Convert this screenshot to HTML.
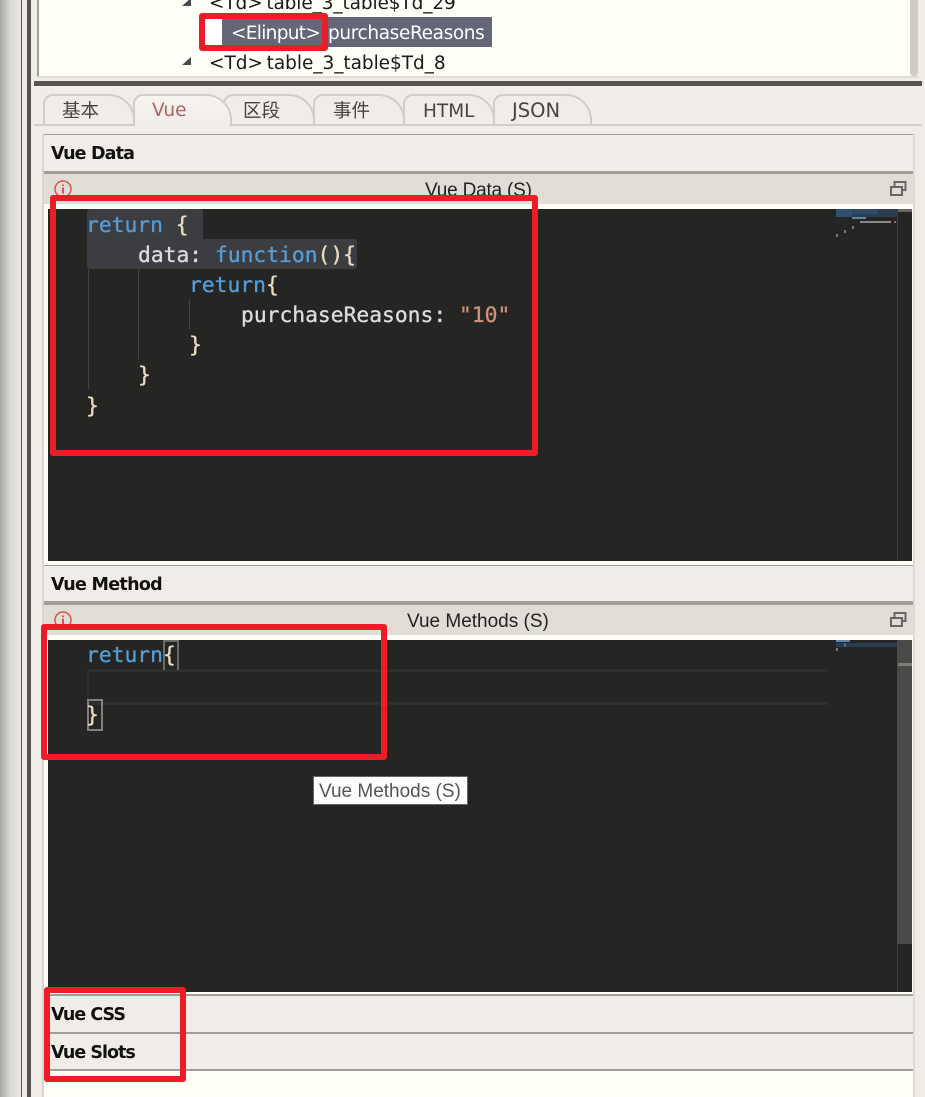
<!DOCTYPE html>
<html><head><meta charset="utf-8"><style>
html,body{margin:0;padding:0}
body{width:925px;height:1097px;position:relative;overflow:hidden;background:#f0ede8;font-family:"Liberation Sans","Noto Sans CJK SC",sans-serif}
.a{position:absolute}
.t{position:absolute;white-space:pre;color:#1a1a1a}
.h{position:absolute;left:51px;font:bold 17.5px/24px "DejaVu Sans",sans-serif;letter-spacing:-.85px;color:#111;white-space:pre}
.c{position:absolute;white-space:pre;font:21.3px/30px "DejaVu Sans Mono",monospace;color:#dcdcdc;-webkit-text-stroke:.35px currentColor}
.k{color:#569cd6}.s{color:#ce9178}.y{color:#e8dcc0}
.g{position:absolute;width:1px;background:#444}
.tab{position:absolute;top:94px;height:30px;border:2px solid #d0cdc8;border-bottom:0;border-radius:10px 26px 0 0;box-sizing:border-box;background:#f0ede8;color:#444;font:18.5px/30px "Liberation Sans","Noto Sans CJK SC",sans-serif;text-align:left;padding-left:18px}
.r{position:absolute;border:6px solid #ee1c27;border-radius:3px;box-sizing:border-box}
.tt{position:absolute;font:19px/24px "Liberation Sans",sans-serif;color:#222;white-space:pre}
</style></head><body>
<div class="a" style="left:0;top:0;width:21px;height:1097px;background:linear-gradient(90deg,#a9a7a1,#d8d6d0 45%,#ebe9e4)"></div>
<div class="a" style="left:21px;top:0;width:1px;height:1097px;background:#555"></div>
<div class="a" style="left:27px;top:0;width:4px;height:1097px;background:#555451"></div>

<div class="a" style="left:37px;top:0;width:873px;height:76px;background:#fffff8;border-left:2px solid #a09e98;box-sizing:border-box"></div>
<div class="a" style="left:37px;top:76px;width:882px;height:2px;background:#e0ddd6"></div>
<div class="a" style="left:910px;top:0;width:8px;height:76px;background:#cfccc6;border-radius:0 0 4px 4px"></div>
<div class="a" style="left:34px;top:81px;width:888px;height:5px;background:#555451"></div>

<svg class="a" style="left:180px;top:0" width="14" height="72"><path d="M2 6 L11 6 L11 -2 Z M2 65 L11 65 L11 57 Z" fill="#4a4a4a"/></svg>
<div class="t" style="left:209px;top:-8px;font:18.5px/24px 'DejaVu Sans',sans-serif;letter-spacing:-.12px;word-spacing:-2px">&lt;Td&gt; table_3_table$Td_29</div>
<div class="t" style="left:209px;top:52px;font:18.5px/24px 'DejaVu Sans',sans-serif;letter-spacing:-.05px;word-spacing:-2px">&lt;Td&gt; table_3_table$Td_8</div>
<div class="a" style="left:205px;top:17px;width:17px;height:30px;background:#fff"></div>
<div class="a" style="left:222px;top:17px;width:270px;height:30px;background:#656779"></div>
<div class="t" style="left:231px;top:22px;color:#fff;font:18.5px/24px 'DejaVu Sans',sans-serif;letter-spacing:-.7px">&lt;Elinput&gt;</div>
<div class="t" style="left:328px;top:22px;color:#fff;font:18.5px/24px 'DejaVu Sans',sans-serif;letter-spacing:-.37px">purchaseReasons</div>

<div class="a" style="left:34px;top:124px;width:888px;height:2px;background:#d0cdc8"></div>
<div class="tab" style="left:43px;width:92px;padding-left:17px">基本</div>
<div class="tab" style="left:133px;width:99px;height:32px;color:#a96464;background:linear-gradient(#f6f4ef,#f0ede8);z-index:2;font-family:'DejaVu Sans',sans-serif;font-size:18.5px;padding-left:17px">Vue</div>
<div class="tab" style="left:223px;width:92px">区段</div>
<div class="tab" style="left:313px;width:92px">事件</div>
<div class="tab" style="left:403px;width:92px;font-family:'DejaVu Sans',sans-serif;font-size:18.5px;line-height:32px">HTML</div>
<div class="tab" style="left:493px;width:99px;font-family:'DejaVu Sans',sans-serif;font-size:19.5px;padding-left:17px">JSON</div>

<!-- outer box -->
<div class="a" style="left:43px;top:134px;width:872px;height:1px;background:#a09e98"></div>
<div class="a" style="left:42px;top:134px;width:2px;height:963px;background:#d8d5d0"></div>
<div class="a" style="left:913px;top:134px;width:2px;height:963px;background:#dedbd5"></div>
<div class="h" style="top:142px">Vue Data</div>
<div class="a" style="left:44px;top:171px;width:869px;height:3px;background:#a09e98"></div>
<div class="a" style="left:44px;top:174px;width:869px;height:30px;background:#e0ddd6"></div>
<div class="a" style="left:44px;top:204px;width:869px;height:361px;background:#fffff8"></div>
<div class="tt" style="left:425px;top:179px;letter-spacing:-.2px">Vue Data (S)</div>
<svg class="a" style="left:53px;top:179px" width="20" height="20"><circle cx="10" cy="10" r="8" fill="none" stroke="#d9534f" stroke-width="1.5"/><path d="M10 8.5V14.5M10 5.5V7" stroke="#d9534f" stroke-width="2"/></svg>
<svg class="a" style="left:889px;top:180px" width="18" height="18" fill="none" stroke="#666" stroke-width="2"><rect x="5.5" y="2" width="11" height="8"/><rect x="2" y="7" width="11" height="8" fill="#e0ddd6"/></svg>
<div class="a" style="left:48px;top:209px;width:864px;height:352px;background:#252524"></div>
<div class="a" style="left:87px;top:209px;width:116px;height:30px;background:#3c3d40;border-radius:3px 3px 0 0"></div>
<div class="a" style="left:87px;top:239px;width:270px;height:30px;background:#3c3d40;border-radius:0 3px 3px 3px"></div>
<div class="g" style="left:88px;top:269px;height:120px"></div>
<div class="g" style="left:138px;top:269px;height:90px"></div>
<div class="g" style="left:189px;top:299px;height:30px"></div>
<div class="c" style="left:86px;top:211px"><span class="k">return</span> <span class="y">{</span></div>
<div class="c" style="left:138px;top:241px">data: <span class="k">function</span><span class="y">(){</span></div>
<div class="c" style="left:189px;top:271px"><span class="k">return</span><span class="y">{</span></div>
<div class="c" style="left:241px;top:301px">purchaseReasons: <span class="s">"10"</span></div>
<div class="c y" style="left:189px;top:331px">}</div>
<div class="c y" style="left:138px;top:361px">}</div>
<div class="c y" style="left:86px;top:392px">}</div>
<!-- minimap 1 -->
<div class="a" style="left:836px;top:209px;width:62px;height:8px;background:#2c3d50"></div>
<div class="a" style="left:836px;top:209px;width:16px;height:8px;background:#2f4f73"></div>
<div class="a" style="left:852px;top:209px;width:26px;height:5px;background:#2f4a66"></div>
<div class="a" style="left:852px;top:217px;width:14px;height:2px;background:#5b84ad"></div>
<div class="a" style="left:860px;top:221px;width:31px;height:2px;background:#888"></div>
<div class="a" style="left:894px;top:221px;width:2px;height:2px;background:#9a6a50"></div>
<div class="a" style="left:852px;top:226px;width:2px;height:3px;background:#777"></div>
<div class="a" style="left:844px;top:230px;width:2px;height:3px;background:#777"></div>
<div class="a" style="left:836px;top:234px;width:2px;height:3px;background:#777"></div>
<div class="a" style="left:897px;top:209px;width:1px;height:352px;background:#3a3a3a"></div>
<div class="a" style="left:898px;top:209px;width:14px;height:3px;background:#666"></div>

<div class="a" style="left:44px;top:565px;width:869px;height:1px;background:#a09e98"></div>
<div class="a" style="left:44px;top:566px;width:869px;height:35px;background:#f0ede8"></div>
<div class="h" style="top:573px;letter-spacing:-.7px">Vue Method</div>
<div class="a" style="left:44px;top:601px;width:869px;height:4px;background:#a09e98"></div>
<div class="a" style="left:44px;top:605px;width:869px;height:30px;background:#e0ddd6"></div>
<div class="a" style="left:44px;top:635px;width:869px;height:359px;background:#fffff8"></div>
<div class="tt" style="left:407px;top:610px">Vue Methods (S)</div>
<svg class="a" style="left:53px;top:610px" width="20" height="20"><circle cx="10" cy="10" r="8" fill="none" stroke="#d9534f" stroke-width="1.5"/><path d="M10 8.5V14.5M10 5.5V7" stroke="#d9534f" stroke-width="2"/></svg>
<svg class="a" style="left:889px;top:611px" width="18" height="18" fill="none" stroke="#666" stroke-width="2"><rect x="5.5" y="2" width="11" height="8"/><rect x="2" y="7" width="11" height="8" fill="#e0ddd6"/></svg>
<div class="a" style="left:48px;top:640px;width:864px;height:352px;background:#252524"></div>
<div class="a" style="left:87px;top:669px;width:741px;height:3px;background:#2e2e2e"></div>
<div class="a" style="left:87px;top:702px;width:741px;height:3px;background:#2e2e2e"></div>
<div class="a" style="left:87px;top:672px;width:2px;height:30px;background:#2e2e2e"></div>
<div class="a" style="left:163px;top:640px;width:16px;height:30px;border:2px solid #6b6b6b;border-bottom:0;box-sizing:border-box"></div>
<div class="a" style="left:87px;top:699px;width:16px;height:32px;border:2px solid #808080;box-sizing:border-box"></div>
<div class="c" style="left:86px;top:641px"><span class="k">return</span><span class="y">{</span></div>
<div class="c y" style="left:86px;top:701px">}</div>
<div class="a" style="left:836px;top:640px;width:14px;height:2px;background:#5b84ad"></div>
<div class="a" style="left:836px;top:643px;width:61px;height:4px;background:#2c3d50"></div>
<div class="a" style="left:844px;top:643px;width:2px;height:4px;background:#3f6a96"></div>
<div class="a" style="left:836px;top:648px;width:2px;height:3px;background:#777"></div>
<div class="a" style="left:897px;top:640px;width:15px;height:304px;background:#4a4a48"></div>
<div class="a" style="left:898px;top:663px;width:14px;height:3px;background:#7d7d7a"></div>
<div class="a" style="left:897px;top:944px;width:1px;height:48px;background:#3a3a3a"></div>
<div class="a" style="left:313px;top:776px;width:155px;height:29px;background:#fff;border:1px solid #666;box-sizing:border-box"></div>
<div class="tt" style="left:319px;top:780px;color:#555">Vue Methods (S)</div>

<div class="a" style="left:44px;top:994px;width:869px;height:2px;background:#a09e98"></div>
<div class="a" style="left:44px;top:996px;width:869px;height:36px;background:#f0ede8"></div>
<div class="h" style="top:1003px;letter-spacing:-1px">Vue CSS</div>
<div class="a" style="left:44px;top:1032px;width:869px;height:2px;background:#a09e98"></div>
<div class="a" style="left:44px;top:1034px;width:869px;height:35px;background:#f0ede8"></div>
<div class="h" style="top:1041px;letter-spacing:-1px">Vue Slots</div>
<div class="a" style="left:44px;top:1069px;width:869px;height:2px;background:#a09e98"></div>
<div class="a" style="left:44px;top:1071px;width:869px;height:26px;background:#fffff8"></div>

<div class="r" style="left:199px;top:13px;width:129px;height:38px"></div>
<div class="r" style="left:50px;top:195px;width:488px;height:261px"></div>
<div class="r" style="left:41px;top:624px;width:346px;height:136px"></div>
<div class="r" style="left:44px;top:987px;width:142px;height:95px"></div>
</body></html>
